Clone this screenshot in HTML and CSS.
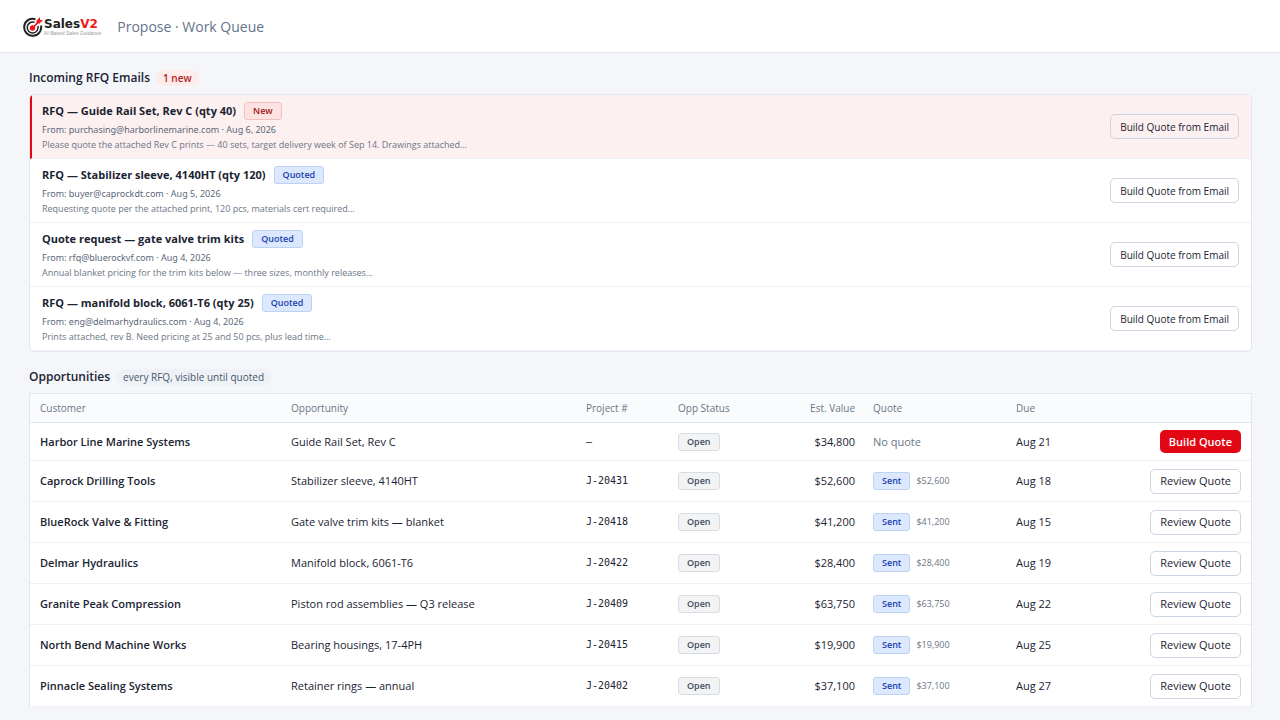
FILE: index.html
```html
<!DOCTYPE html>
<html lang="en">
<head>
    <meta charset="UTF-8">
    <meta name="viewport" content="width=device-width, initial-scale=1">
    <title>Propose · Work Queue</title>
    <link rel="stylesheet" href="styles.css">
</head>
<body>
    <header class="topbar">
        <div class="logo">
            <svg class="logo-mark" viewBox="0 0 40 40" aria-hidden="true">
                <path d="M25 4.5A17 17 0 1 0 36 17" fill="none" stroke="#222" stroke-width="4"/>
                <path d="M23 10.5A11 11 0 1 0 30 18" fill="none" stroke="#222" stroke-width="3"/>
                <circle cx="19" cy="22" r="5.5" fill="#f01818"/>
                <path d="M19 22L32 9" stroke="#f01818" stroke-width="3.5"/>
                <path d="M27 13V7L34 0V6H40L33 13Z" fill="#f01818"/>
            </svg>
            <div class="logo-text">
                <div class="logo-name">Sales<span>V2</span></div>
                <div class="logo-tag">AI-Based Sales Guidance</div>
            </div>
        </div>
        <h1>Propose · Work Queue</h1>
    </header>

    <main>
        <div class="section-head">
            <h2>Incoming RFQ Emails</h2>
            <span class="pill pill-red">1 new</span>
        </div>

        <div class="email-list">
            <div class="email unread">
                <div class="email-body">
                    <div class="email-title">RFQ — Guide Rail Set, Rev C (qty 40) <span class="badge badge-new">New</span></div>
                    <div class="email-from">From: purchasing@harborlinemarine.com · Aug 6, 2026</div>
                    <div class="email-text">Please quote the attached Rev C prints — 40 sets, target delivery week of Sep 14. Drawings attached…</div>
                </div>
                <button class="btn btn-small">Build Quote from Email</button>
            </div>
            <div class="email">
                <div class="email-body">
                    <div class="email-title">RFQ — Stabilizer sleeve, 4140HT (qty 120) <span class="badge badge-blue">Quoted</span></div>
                    <div class="email-from">From: buyer@caprockdt.com · Aug 5, 2026</div>
                    <div class="email-text">Requesting quote per the attached print, 120 pcs, materials cert required…</div>
                </div>
                <button class="btn btn-small">Build Quote from Email</button>
            </div>
            <div class="email">
                <div class="email-body">
                    <div class="email-title">Quote request — gate valve trim kits <span class="badge badge-blue">Quoted</span></div>
                    <div class="email-from">From: rfq@bluerockvf.com · Aug 4, 2026</div>
                    <div class="email-text">Annual blanket pricing for the trim kits below — three sizes, monthly releases…</div>
                </div>
                <button class="btn btn-small">Build Quote from Email</button>
            </div>
            <div class="email">
                <div class="email-body">
                    <div class="email-title">RFQ — manifold block, 6061-T6 (qty 25) <span class="badge badge-blue">Quoted</span></div>
                    <div class="email-from">From: eng@delmarhydraulics.com · Aug 4, 2026</div>
                    <div class="email-text">Prints attached, rev B. Need pricing at 25 and 50 pcs, plus lead time…</div>
                </div>
                <button class="btn btn-small">Build Quote from Email</button>
            </div>
        </div>

        <div class="section-head">
            <h2>Opportunities</h2>
            <span class="pill">every RFQ, visible until quoted</span>
        </div>

        <table class="opps">
            <thead>
                <tr>
                    <th class="col-customer">Customer</th>
                    <th class="col-opp">Opportunity</th>
                    <th class="col-project">Project #</th>
                    <th class="col-status">Opp Status</th>
                    <th class="col-value">Est. Value</th>
                    <th class="col-quote">Quote</th>
                    <th class="col-due">Due</th>
                    <th class="col-action"></th>
                </tr>
            </thead>
            <tbody>
                <tr class="no-quote">
                    <td class="customer">Harbor Line Marine Systems</td>
                    <td>Guide Rail Set, Rev C</td>
                    <td class="project">–</td>
                    <td><span class="badge">Open</span></td>
                    <td class="value">$34,800</td>
                    <td class="none">No quote</td>
                    <td>Aug 21</td>
                    <td class="action"><button class="btn btn-primary">Build Quote</button></td>
                </tr>
                <tr>
                    <td class="customer">Caprock Drilling Tools</td>
                    <td>Stabilizer sleeve, 4140HT</td>
                    <td class="project">J-20431</td>
                    <td><span class="badge">Open</span></td>
                    <td class="value">$52,600</td>
                    <td><span class="badge badge-blue">Sent</span><span class="amount">$52,600</span></td>
                    <td>Aug 18</td>
                    <td class="action"><button class="btn">Review Quote</button></td>
                </tr>
                <tr>
                    <td class="customer">BlueRock Valve &amp; Fitting</td>
                    <td>Gate valve trim kits — blanket</td>
                    <td class="project">J-20418</td>
                    <td><span class="badge">Open</span></td>
                    <td class="value">$41,200</td>
                    <td><span class="badge badge-blue">Sent</span><span class="amount">$41,200</span></td>
                    <td>Aug 15</td>
                    <td class="action"><button class="btn">Review Quote</button></td>
                </tr>
                <tr>
                    <td class="customer">Delmar Hydraulics</td>
                    <td>Manifold block, 6061-T6</td>
                    <td class="project">J-20422</td>
                    <td><span class="badge">Open</span></td>
                    <td class="value">$28,400</td>
                    <td><span class="badge badge-blue">Sent</span><span class="amount">$28,400</span></td>
                    <td>Aug 19</td>
                    <td class="action"><button class="btn">Review Quote</button></td>
                </tr>
                <tr>
                    <td class="customer">Granite Peak Compression</td>
                    <td>Piston rod assemblies — Q3 release</td>
                    <td class="project">J-20409</td>
                    <td><span class="badge">Open</span></td>
                    <td class="value">$63,750</td>
                    <td><span class="badge badge-blue">Sent</span><span class="amount">$63,750</span></td>
                    <td>Aug 22</td>
                    <td class="action"><button class="btn">Review Quote</button></td>
                </tr>
                <tr>
                    <td class="customer">North Bend Machine Works</td>
                    <td>Bearing housings, 17-4PH</td>
                    <td class="project">J-20415</td>
                    <td><span class="badge">Open</span></td>
                    <td class="value">$19,900</td>
                    <td><span class="badge badge-blue">Sent</span><span class="amount">$19,900</span></td>
                    <td>Aug 25</td>
                    <td class="action"><button class="btn">Review Quote</button></td>
                </tr>
                <tr>
                    <td class="customer">Pinnacle Sealing Systems</td>
                    <td>Retainer rings — annual</td>
                    <td class="project">J-20402</td>
                    <td><span class="badge">Open</span></td>
                    <td class="value">$37,100</td>
                    <td><span class="badge badge-blue">Sent</span><span class="amount">$37,100</span></td>
                    <td>Aug 27</td>
                    <td class="action"><button class="btn">Review Quote</button></td>
                </tr>
            </tbody>
        </table>
    </main>
</body>
</html>
```

FILE: styles.css
```css
* {
    box-sizing: border-box;
}

body {
    margin: 0;
    background: #f4f6fa;
    color: #1a2332;
    font-family: "Segoe UI", "Open Sans", "Noto Sans", sans-serif;
    font-size: 11px;
    line-height: 16px;
}

h1, h2 {
    margin: 0;
}

.topbar {
    display: flex;
    align-items: center;
    gap: 16px;
    height: 53px;
    padding: 2px 23px 0;
    background: #fff;
    border-bottom: 1px solid #e2e6ef;
}

.topbar h1 {
    color: #64748b;
    font-size: 14px;
    font-weight: 400;
}

.logo {
    display: flex;
    align-items: center;
    gap: 1px;
}

.logo-mark {
    width: 20px;
    height: 20px;
}

.logo-name {
    color: #222;
    font: bold 12px/12px "DejaVu Sans", sans-serif;
}

.logo-name span {
    color: #f01818;
}

.logo-tag {
    color: #999;
    font: 5px/7px "Liberation Sans", sans-serif;
}

main {
    padding: 16px 28px 16px 29px;
}

.section-head {
    display: flex;
    align-items: center;
    gap: 6px;
    height: 17px;
    margin-bottom: 8px;
}

.section-head h2 {
    font-size: 12px;
    font-weight: 600;
}

.pill {
    padding: 0 7px;
    border-radius: 9px;
    background: #eef2f7;
    color: #475569;
    font-size: 10px;
    font-weight: 500;
}

.pill-red {
    background: #fdecec;
    color: #b42318;
    font-weight: 600;
}

.email-list {
    margin-bottom: 16px;
    overflow: hidden;
    background: #fff;
    border: 1px solid #e2e6ef;
    border-radius: 5px;
}

.email {
    display: flex;
    align-items: center;
    justify-content: space-between;
    padding: 6px 12px;
    border-bottom: 1px solid #edf0f6;
}

.email.unread {
    padding-left: 10px;
    background: #fdf0f0;
    border-left: 2px solid #e30613;
}

.email-title {
    display: flex;
    align-items: center;
    gap: 8px;
    height: 20px;
    font-weight: 700;
}

.email-from {
    color: #5b6779;
    font-family: "Segoe UI", "Noto Sans", sans-serif;
    font-size: 9px;
    line-height: 17px;
}

.email-text {
    color: #6b7686;
    font-size: 9px;
    line-height: 14px;
}

.badge {
    display: inline-block;
    padding: 0 8px;
    background: #f1f3f5;
    border: 1px solid #d9dde2;
    border-radius: 3px;
    color: #475060;
    font-size: 9px;
    font-weight: 600;
    line-height: 16px;
}

.badge-blue {
    background: #dbe8fe;
    border-color: #bdd1f3;
    color: #1e40af;
}

.badge-new {
    background: #fde2e2;
    border-color: #f3c0c0;
    color: #991b1b;
}

.btn {
    height: 25px;
    padding: 0 9px;
    background: #fff;
    border: 1px solid #cbd5e1;
    border-radius: 5px;
    color: #1a2332;
    font-family: inherit;
    font-size: 11px;
    font-weight: 500;
    line-height: 16px;
    white-space: nowrap;
    cursor: pointer;
}

.btn-small {
    font-size: 10px;
}

.unread .btn {
    background: transparent;
}

.btn-primary {
    height: 23px;
    background: #e30613;
    border: none;
    color: #fff;
    font-weight: 600;
}

.opps {
    width: 100%;
    table-layout: fixed;
    border-collapse: separate;
    border-spacing: 0;
    background: #fff;
    border: 1px solid #e2e6ef;
    border-bottom: none;
}

.opps th {
    height: 29px;
    padding: 0 10px;
    background: #fafbfd;
    border-bottom: 1px solid #e2e6ef;
    color: #6b7686;
    font-size: 10px;
    font-weight: 500;
    text-align: left;
}

.opps td {
    height: 41px;
    padding: 7px 10px;
    border-bottom: 1px solid #edf0f6;
    white-space: nowrap;
}

.opps .no-quote td {
    height: 38px;
}

.opps td .btn {
    display: block;
    margin-left: auto;
}

.col-customer {
    width: 251px;
}

.col-project {
    width: 92px;
}

.col-status {
    width: 92px;
}

.opps .col-value {
    width: 103px;
    text-align: right;
}

.opps .col-value,
.opps .value {
    padding-right: 8px;
}

.col-quote {
    width: 143px;
}

.col-due {
    width: 90px;
}

.col-action {
    width: 155px;
}

.customer {
    font-weight: 600;
}

.project {
    font-family: Consolas, "DejaVu Sans Mono", monospace;
    font-size: 10px;
}

.value {
    text-align: right;
}

.none {
    color: #6b7686;
}

.amount {
    margin-left: 6px;
    color: #6b7686;
    font-size: 9px;
}
```
